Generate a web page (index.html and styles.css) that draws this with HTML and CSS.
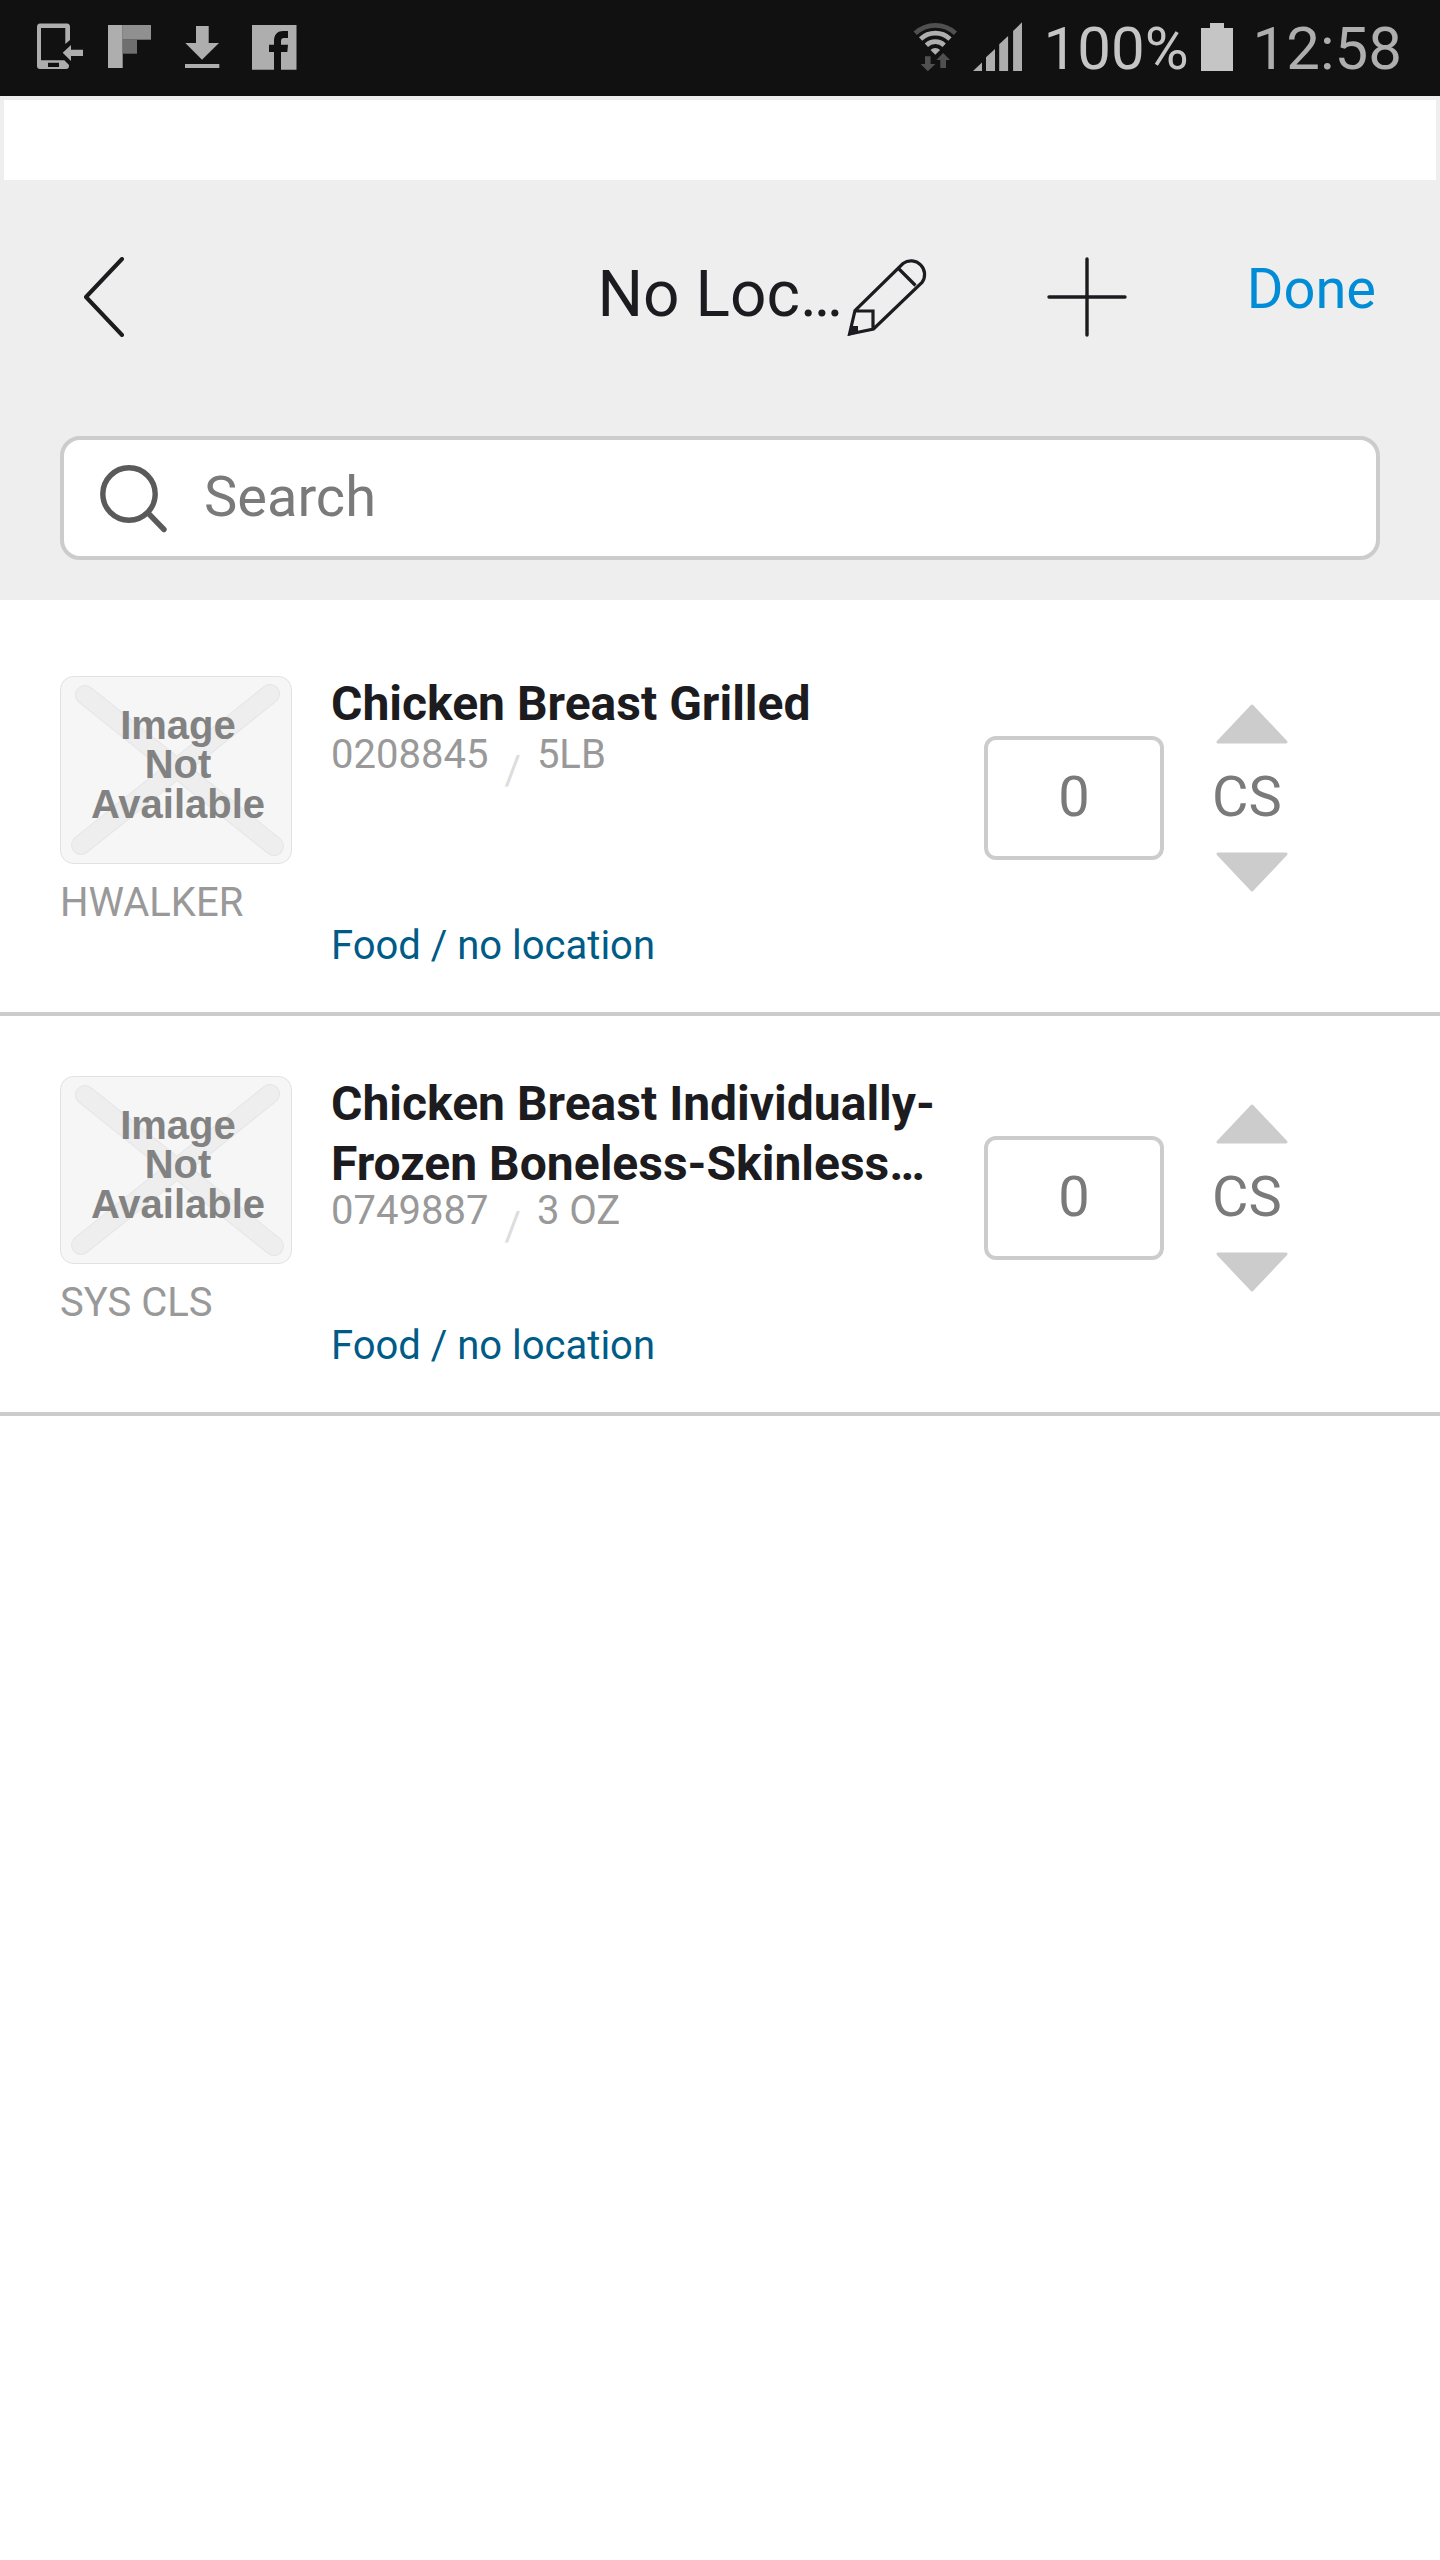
FILE: index.html
```html
<!DOCTYPE html>
<html lang="en">
<head>
<meta charset="utf-8">
<meta name="viewport" content="width=device-width, initial-scale=1">
<title>No Location</title>
<link rel="stylesheet" href="styles.css">
</head>
<body>
<svg class="sprite" aria-hidden="true">
  <symbol id="no-image" viewBox="0 0 232 188">
    <rect class="ph-card" x="0.5" y="0.5" width="231" height="187" rx="13"/>
    <path class="ph-edge" d="M25 19L214 170M210 18L21 169"/>
    <path class="ph-cross" d="M25 19L214 170M210 18L21 169"/>
  </symbol>
  <symbol id="arrow-up" viewBox="0 0 72 40">
    <path d="M36 2L70 38H2Z"/>
  </symbol>
  <symbol id="arrow-down" viewBox="0 0 72 40">
    <path d="M36 38L70 2H2Z"/>
  </symbol>
</svg>

<div class="status">
  <div class="status-notices">
    <svg width="48" height="56" viewBox="0 0 48 56" aria-hidden="true">
      <path fill="#aeaeae" fill-rule="evenodd" d="M4 2.500H31Q34 2.500 34 6V19L29.300 23V7H5V39.300H28.300L33 44V45Q33 48 30 48H4Q1 48 1 45V6Q1 2.500 4 2.500ZM12 41.700V46H23V41.700Z"/>
      <path fill="#aeaeae" d="M26.700 31.700L35 24V28.700H47V35H35V40Z"/>
    </svg>
    <svg width="48" height="56" viewBox="0 0 48 56" aria-hidden="true">
      <path fill="#aeaeae" d="M0 4H14.700V47H0Z"/>
      <path fill="#909090" d="M14.700 4H43V18.700H14.700Z"/>
      <path fill="#6f6f6f" d="M14.700 18.700H29V32.700H14.700Z"/>
    </svg>
    <svg width="48" height="56" viewBox="0 0 48 56" aria-hidden="true">
      <path fill="#aeaeae" d="M16 5H28.700V22H39L22 38.700L5.300 22H16ZM5 43H39.300V47H5Z"/>
    </svg>
    <svg width="48" height="56" viewBox="0 0 48 56" aria-hidden="true">
      <path fill="#aeaeae" d="M0 4H44.500V48.700H0Z"/>
      <path fill="#111" d="M22 49V31H17V23.700H22V20C22 13 26 10 31 10H36V17H32C30 17 29 18 29 20V23.700H36L35.300 31H29V49Z"/>
    </svg>
  </div>
  <div class="status-system">
    <svg width="48" height="56" viewBox="0 0 48 56" aria-hidden="true">
      <g fill="none" stroke-width="4.700">
        <path stroke="#505050" d="M2.200 12.200A29.500 29.500 0 0 1 42.400 12.200"/>
        <path stroke="#aeaeae" d="M7.600 18A21.500 21.500 0 0 1 37 18M13.400 24.200A13 13 0 0 1 31.200 24.200"/>
      </g>
      <path fill="#aeaeae" d="M22.300 33.700L17.500 29A7 7 0 0 1 27.100 29Z"/>
      <path fill="#505050" d="M12 35.300H17.600V43H22.300L14.800 50.300L7.600 43H12ZM30.100 32L37 39H33V47H27.300V39H23.400Z"/>
    </svg>
    <svg class="signal" width="50" height="56" viewBox="0 0 50 56" aria-hidden="true">
      <path fill="#aeaeae" d="M0 50L9 41.500V50ZM13 50V36.300L22 28V50ZM26.200 50V23.300L35.100 15V50ZM40.100 50V10L49 1.300V50Z"/>
    </svg>
    <span class="charge">100%</span>
    <svg class="battery" width="32" height="56" viewBox="0 0 32 56" aria-hidden="true">
      <path fill="#c5c5c5" d="M0 7H9V2H23V7H32V50H0Z"/>
    </svg>
    <time class="clock">12:58</time>
  </div>
</div>

<div class="banner"></div>

<header class="header">
  <nav class="nav">
    <button class="icon-button back" type="button" aria-label="Back">
      <svg width="80" height="80" viewBox="0 0 80 80" aria-hidden="true">
        <path fill="none" stroke="#1c1c1e" stroke-width="4" stroke-linecap="round" stroke-linejoin="round" d="M62 2L26 40L62 78"/>
      </svg>
    </button>
    <h1 class="title">No Loc…</h1>
    <button class="icon-button edit" type="button" aria-label="Edit name">
      <svg width="80" height="80" viewBox="0 0 80 80" aria-hidden="true">
        <path fill="none" stroke="#1b1b20" stroke-width="3.200" d="M2.500 77L8 53.500L56 6.500A13.600 13.600 0 0 1 75 25.500L26.500 72ZM8 54H26V72M51.500 11.500L68.500 28.500"/>
        <path fill="#1b1b20" d="M4 69H11V76L1 79Z"/>
      </svg>
    </button>
    <button class="icon-button" type="button" aria-label="Add item">
      <svg width="80" height="80" viewBox="0 0 80 80" aria-hidden="true">
        <path fill="none" stroke="#1b1b20" stroke-width="3.400" stroke-linecap="round" d="M2 40H78M40 2V78"/>
      </svg>
    </button>
    <button class="done" type="button">Done</button>
  </nav>
  <label class="search">
    <svg width="72" height="72" viewBox="0 0 72 72" aria-hidden="true">
      <g fill="none" stroke="#5a5a5a" stroke-width="5.400" stroke-linecap="round">
        <circle cx="33" cy="32" r="26.200"/>
        <path d="M52.500 51.500L68 67.500"/>
      </g>
    </svg>
    <input class="search-input" type="search" placeholder="Search" aria-label="Search">
  </label>
</header>

<main>
  <ul class="items">
    <li class="item">
      <div class="media">
        <svg class="thumb" viewBox="0 0 232 188" role="img" aria-label="Image not available">
          <use href="#no-image"/>
          <text x="118" y="63">Image</text>
          <text x="118" y="102">Not</text>
          <text x="118" y="142">Available</text>
        </svg>
        <span class="brand">HWALKER</span>
      </div>
      <div class="details">
        <h2 class="name">Chicken Breast Grilled</h2>
        <div class="meta"><span>0208845</span><span class="slash">/</span><span>5LB</span></div>
        <a class="location" href="#">Food / no location</a>
      </div>
      <input class="quantity" type="text" inputmode="numeric" placeholder="0" aria-label="Quantity of Chicken Breast Grilled">
      <div class="unit">
        <button class="step" type="button" aria-label="Previous unit"><svg width="72" height="40"><use href="#arrow-up"/></svg></button>
        <span class="unit-name">CS</span>
        <button class="step" type="button" aria-label="Next unit"><svg width="72" height="40"><use href="#arrow-down"/></svg></button>
      </div>
    </li>
    <li class="item">
      <div class="media">
        <svg class="thumb" viewBox="0 0 232 188" role="img" aria-label="Image not available">
          <use href="#no-image"/>
          <text x="118" y="63">Image</text>
          <text x="118" y="102">Not</text>
          <text x="118" y="142">Available</text>
        </svg>
        <span class="brand">SYS CLS</span>
      </div>
      <div class="details">
        <h2 class="name">Chicken Breast Individually-Frozen Boneless-Skinless…</h2>
        <div class="meta"><span>0749887</span><span class="slash">/</span><span>3 OZ</span></div>
        <a class="location" href="#">Food / no location</a>
      </div>
      <input class="quantity" type="text" inputmode="numeric" placeholder="0" aria-label="Quantity of Chicken Breast Individually-Frozen">
      <div class="unit">
        <button class="step" type="button" aria-label="Previous unit"><svg width="72" height="40"><use href="#arrow-up"/></svg></button>
        <span class="unit-name">CS</span>
        <button class="step" type="button" aria-label="Next unit"><svg width="72" height="40"><use href="#arrow-down"/></svg></button>
      </div>
    </li>
  </ul>
</main>
</body>
</html>
```

FILE: styles.css
```css
* {
  box-sizing: border-box;
}

body {
  margin: 0;
  background: #fff;
  color: #1b1b20;
  font-family: Roboto, "Liberation Sans", sans-serif;
  font-size: 40px;
}

svg {
  display: block;
  flex: none;
}

button {
  margin: 0;
  padding: 0;
  border: 0;
  background: none;
  font: inherit;
}

.sprite {
  position: absolute;
  width: 0;
  height: 0;
}

/* Phone status bar */
.status {
  display: flex;
  justify-content: space-between;
  align-items: center;
  height: 96px;
  padding: 2px 38px 0 36px;
  background: #111;
  color: #aeaeae;
  font-size: 60px;
  line-height: 72px;
}

.status-notices {
  display: flex;
  gap: 24px;
}

.status-system {
  display: flex;
  align-items: center;
}

.signal {
  margin: 0 20px 0 12px;
}

.charge {
  color: #c5c5c5;
}

.battery {
  margin: 0 20px 0 12px;
}

.banner {
  height: 84px;
  border: 4px solid #eee;
  border-bottom: 0;
}

/* Page header */
.header {
  padding: 77px 60px 40px;
  background: #eee;
}

.nav {
  display: flex;
  align-items: flex-start;
  margin-bottom: 99px;
  padding-right: 4px;
}

.back {
  margin-right: auto;
}

.title {
  margin: 0 4px 0 0;
  font-size: 64px;
  font-weight: 400;
  line-height: 76px;
}

.edit,
.edit + .icon-button {
  margin-right: 120px;
}

.done {
  color: #008cd6;
  font-size: 56px;
  line-height: 64px;
}

.search {
  display: flex;
  align-items: center;
  gap: 36px;
  height: 124px;
  padding: 0 32px;
  border: 4px solid #ccc;
  border-radius: 20px;
  background: #fff;
}

.search-input {
  flex: 1;
  min-width: 0;
  padding: 0 0 2px;
  border: 0;
  outline: 0;
  background: none;
  color: #1b1b20;
  font: inherit;
  font-size: 56px;
  appearance: none;
}

.search-input::placeholder,
.quantity::placeholder {
  color: #7a7a7a;
  opacity: 1;
}

/* Item list */
.items {
  margin: 0;
  padding: 16px 0 0;
  list-style: none;
}

.item {
  display: flex;
  align-items: flex-start;
  min-height: 400px;
  padding: 60px 152px 42px 60px;
  border-bottom: 4px solid #ccc;
}

.media {
  display: flex;
  flex: none;
  flex-direction: column;
  gap: 15px;
  width: 232px;
  margin-right: 39px;
}

.thumb {
  width: 232px;
  height: 188px;
  font: 700 40px "Liberation Sans", Arial, sans-serif;
  fill: #828282;
  text-anchor: middle;
}

.ph-card {
  fill: #f6f6f6;
  stroke: #e1e1e1;
}

.ph-edge,
.ph-cross {
  fill: none;
  stroke-linecap: round;
}

.ph-edge {
  stroke: #e5e5e5;
  stroke-width: 20px;
}

.ph-cross {
  stroke: #eee;
  stroke-width: 18px;
}

.brand,
.meta {
  color: #999;
}

.brand {
  line-height: 48px;
}

.details {
  display: flex;
  flex: 1;
  flex-direction: column;
  align-self: stretch;
  min-width: 0;
  margin: -2px 48px 0 0;
}

.name {
  max-height: 116px;
  margin: 0;
  font-size: 48px;
  font-weight: 700;
  line-height: 60px;
}

.meta {
  display: flex;
  gap: 16px;
  margin-top: 1px;
  line-height: 40px;
}

.slash {
  padding-top: 16px;
  color: #ddd;
}

.location {
  margin-top: auto;
  color: #005b87;
  line-height: 48px;
  text-decoration: none;
}

.quantity {
  flex: none;
  width: 180px;
  height: 124px;
  margin: 60px 48px 0 0;
  padding: 0 0 2px;
  border: 4px solid #ccc;
  border-radius: 12px;
  background: #fff;
  color: #7a7a7a;
  font: inherit;
  font-size: 56px;
  text-align: center;
}

.unit {
  display: flex;
  flex: none;
  flex-direction: column;
  gap: 20px;
  width: 76px;
  margin-top: 28px;
  color: #7a7a7a;
  font-size: 56px;
  line-height: 66px;
}

.unit-name {
  padding-bottom: 2px;
}

.step {
  align-self: flex-end;
  fill: #ccc;
  stroke: #ccc;
  stroke-width: 3px;
  stroke-linejoin: round;
}
```
